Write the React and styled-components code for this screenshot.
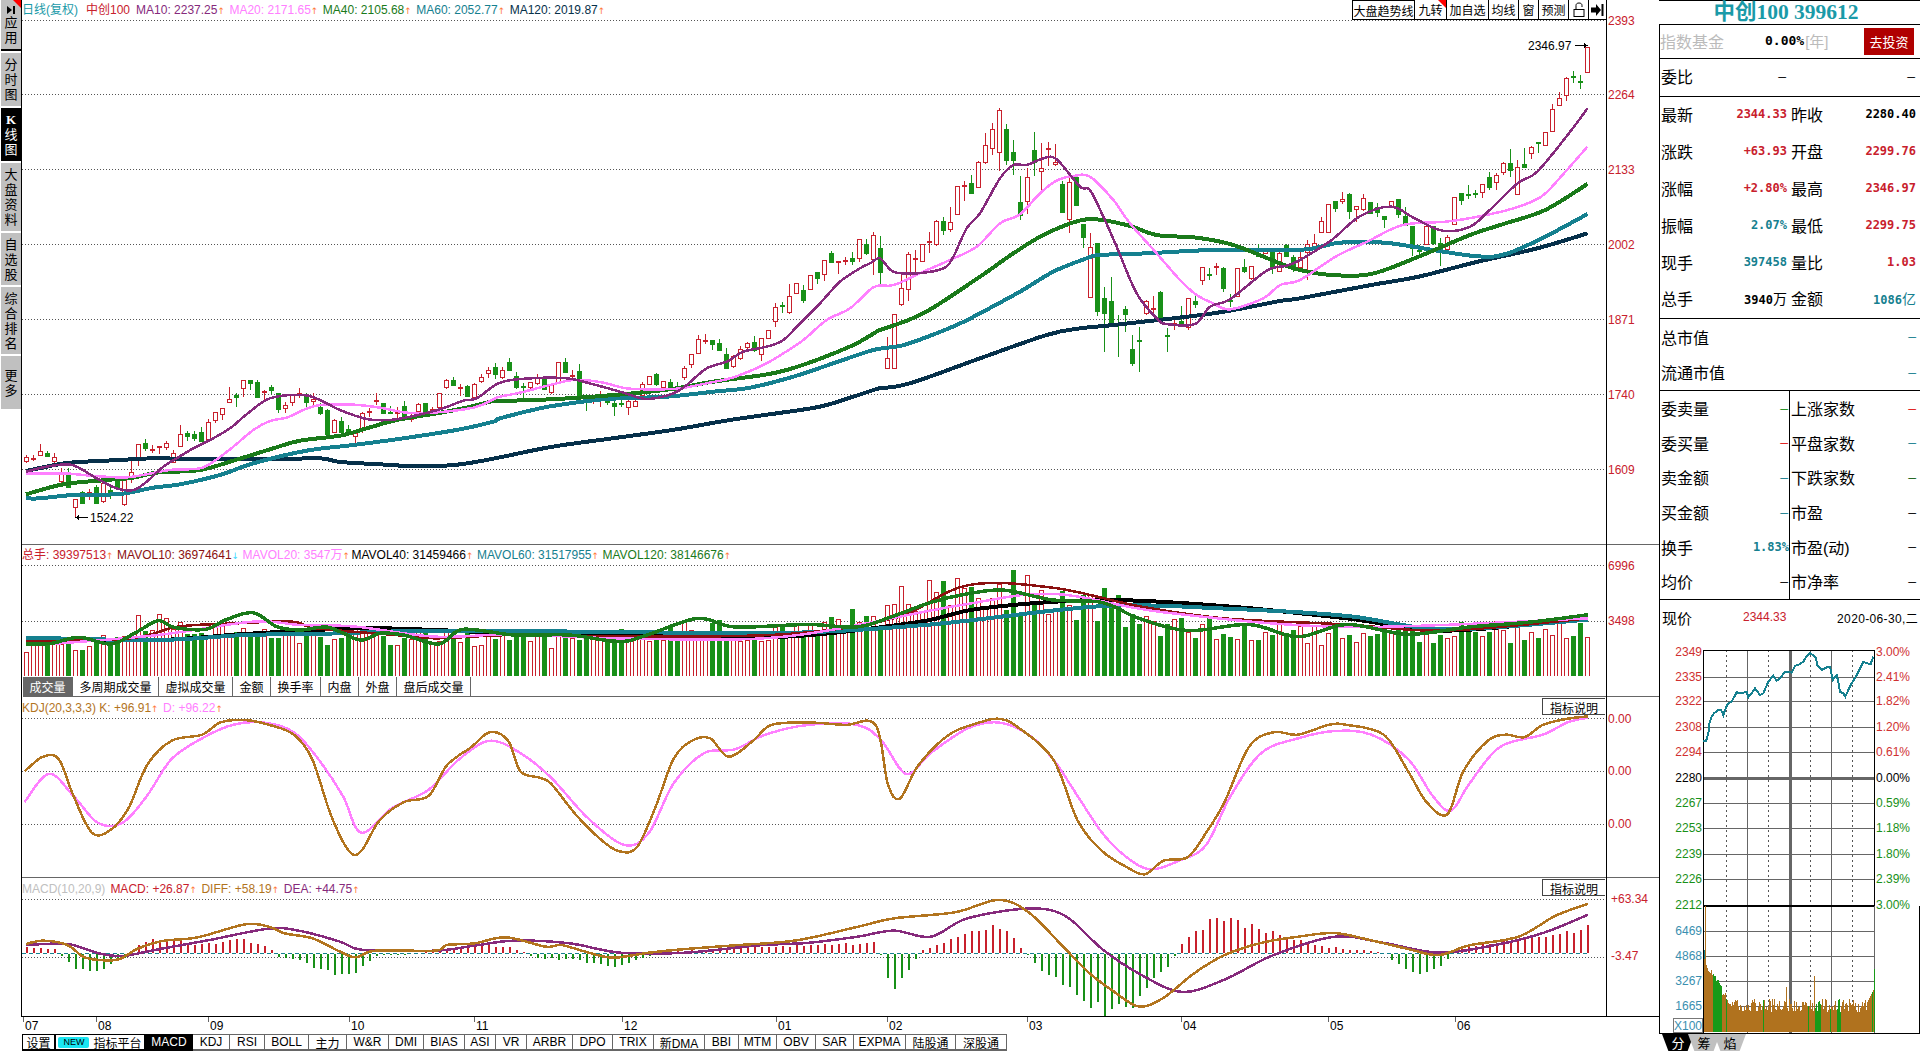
import React from 'react';
import styled, { createGlobalStyle } from 'styled-components';

const SANS = '"Liberation Sans", "Noto Sans CJK SC", sans-serif';
const MONO = '"DejaVu Sans Mono", "Liberation Mono", "Noto Sans CJK SC", monospace';

const RED = '#c8202c';
const GREEN = '#189018';
const TEAL = '#15808f';
const PINK = '#ff80ff';
const PURPLE = '#862a7c';
const DKGREEN = '#1a7a1a';
const NAVY = '#06304a';
const BROWN = '#b2741e';
const LINE = '#666666';

// chart readings: each helper turns points read off a crop into page pixels
const at = (ox, oy, kx = 3, ky = 3) => (pts) => pts.map(([x, y]) => [ox + x / kx, oy + y / ky]);
const LEFT = at(20, 370);
const MID = at(500, 200);
const CENTER = at(880, 100);
const RIGHT = at(1300, 0, 2.529, 3);
const VOL = at(0, 540, 2.529, 3);
const OSC = at(0, 880, 2.529, 3);
const WHOLE = at(0, 0, 1 / 1.2245, 1 / 1.2245);
const MINI = at(1640, 660);

const candleRows = (oy, rows) => rows.map(([up, t, b, h, l]) => ({
  up, top: oy + t / 3, bot: oy + b / 3, hi: oy + h / 3, lo: oy + l / 3,
}));

const CANDLES = [
  ...candleRows(370, [
    [1,260,272,255,280],[1,263,265,255,272],[1,243,254,222,254],[0,250,258,244,262],[1,262,272,250,280],
    [1,305,332,295,340],[0,312,352,295,354],[1,388,410,388,440],[0,367,398,362,400],[1,365,375,358,390],
    [0,351,400,345,402],[1,338,392,335,398],[0,360,372,345,388],[0,330,352,320,360],[1,330,402,325,408],
    [1,305,322,270,340],[1,223,264,222,288],[0,218,234,207,242],[1,238,241,225,248],[1,229,231,229,253],
    [1,220,231,213,240],[1,250,275,240,280],[1,193,227,165,227],[0,190,197,184,212],[0,192,204,183,212],
    [0,186,212,172,214],[1,156,207,148,212],[1,127,149,125,158],[1,115,131,113,150],[1,88,95,52,97],
    [0,74,82,70,110],[1,31,55,30,80],[0,31,40,30,60],[0,35,80,30,85],[1,64,66,60,95],
    [0,50,60,45,72],[0,70,116,68,128],[1,106,114,97,128],[1,76,95,72,107],[1,70,72,55,85],
    [0,78,96,70,112],[1,88,94,68,106],[0,110,130,100,134],[0,120,192,118,195],[1,151,185,148,188],
    [0,153,185,142,188],[0,178,192,165,195],[1,190,198,190,225],[1,128,180,125,190],[1,124,126,115,142],
    [1,90,94,70,105],[0,100,128,98,132],[0,126,129,108,132],[1,125,127,112,148],[0,108,138,93,142],
    [1,145,147,130,155],[1,103,122,100,124],[0,100,126,98,128],[1,118,120,112,132],[1,70,112,68,118],
    [1,31,50,28,56],[0,30,44,20,46],[1,50,52,42,78],[0,48,78,45,82],[1,43,82,40,88],
    [1,22,34,12,38],[1,0,10,-10,24],[0,-10,12,-20,26],[1,0,20,-10,28],
  ]),
  ...candleRows(200, [
    [0,487,510,475,512],[0,528,560,517,566],[0,558,560,548,600],[1,547,560,547,568],[1,532,548,522,555],
    [0,538,568,530,570],[1,553,575,550,582],[1,487,548,487,548],[0,487,516,475,520],[1,525,527,510,540],
    [0,513,584,492,604],[0,585,587,582,632],[1,587,589,585,612],[1,590,592,573,620],[0,590,605,580,615],
    [0,610,618,592,648],[0,608,610,596,620],[1,604,620,590,645],[1,604,617,598,622],[1,553,585,545,590],
    [1,529,551,529,556],[0,522,552,518,558],[1,544,560,542,562],[0,546,562,537,565],[0,558,570,545,575],
    [1,505,530,497,540],[1,463,491,463,504],[1,418,459,405,462],[1,420,422,403,432],[0,420,432,420,450],
    [0,430,450,418,452],[0,462,503,445,505],[1,467,497,465,505],[1,448,474,438,480],[1,430,442,425,455],
    [0,426,450,408,455],[1,415,461,415,483],[1,391,415,391,415],[1,322,362,310,380],[0,315,317,306,338],
    [1,289,335,252,342],[1,250,280,250,282],[0,270,300,255,308],[1,226,266,226,266],[0,216,234,216,252],
    [1,181,223,181,243],[0,159,185,153,188],[1,183,185,183,222],[1,181,183,170,195],[0,174,182,156,195],
    [1,118,175,118,186],[0,132,158,117,165],[1,106,176,96,224],[0,144,216,108,258],
  ]),
  ...candleRows(100, [
    [1,775,805,712,807],[1,643,803,643,803],[1,565,613,515,617],[1,463,568,455,602],[1,473,475,450,515],
    [1,433,482,433,485],[1,424,426,396,458],[1,363,431,360,437],[0,363,389,350,405],[1,367,388,322,395],
    [1,259,343,259,343],[1,254,259,243,303],[0,250,278,225,280],[1,187,260,182,262],[1,136,187,98,192],
    [1,88,145,70,165],[1,31,157,25,212],[0,87,180,72,195],[0,156,180,120,225],[0,306,345,228,360],
    [1,232,302,205,342],[0,150,185,96,228],[1,203,214,130,270],[1,143,146,126,198],[1,186,193,132,198],
    [0,252,335,244,340],[1,246,358,232,398],[0,230,314,230,316],[0,372,410,372,443],[1,442,592,400,592],
    [0,429,632,429,647],[0,594,638,560,755],[0,603,672,532,675],[0,672,674,645,770],[0,627,641,618,695],
    [0,747,788,705,797],[0,720,722,680,815],[1,604,638,600,645],[1,625,628,588,650],[0,576,651,574,654],
    [0,704,706,685,755],[1,668,676,655,690],[0,664,672,618,675],[1,595,682,595,690],[0,603,611,582,625],
    [1,502,541,500,555],[0,522,524,504,540],[1,499,501,490,525],[0,505,563,500,575],[0,600,604,583,622],
    [1,505,588,505,590],[0,502,513,478,520],[1,497,533,497,540],[0,458,467,433,468],[1,443,460,443,462],
    [0,457,500,457,522],[1,460,512,450,514],[0,436,467,432,470],[0,470,498,465,515],[1,470,500,445,512],
    [1,432,455,420,540],[1,428,445,403,450],[1,364,397,350,398],[1,313,397,312,398],[0,304,323,304,337],
    [1,298,304,277,313],[0,283,332,280,356],[1,318,328,318,366],[1,293,326,283,332],[0,307,339,307,342],
    [0,322,337,310,352],
  ]),
  ...candleRows(0, [
    [0,648,656,648,685],[1,604,620,604,622],[0,598,642,598,654],[0,648,675,622,675],[0,678,745,678,768],
    [0,750,753,735,775],[1,678,732,678,735],[0,678,730,678,735],[0,730,745,715,797],[1,710,748,705,750],
    [1,592,672,590,675],[0,580,600,578,615],[0,583,585,555,598],[0,580,582,570,595],[1,553,575,553,595],
    [0,530,562,515,570],[1,525,547,520,570],[1,490,515,485,525],[0,490,510,448,530],[1,500,582,480,585],
    [0,493,500,445,500],[1,440,460,438,478],[0,427,429,427,460],[1,397,435,395,438],[1,328,392,312,392],
    [1,295,314,277,314],[1,235,284,232,302],[0,229,231,213,250],[0,244,246,226,268],[1,142,215,142,215],
  ]),
];

const candleX = (i) => 26 + 7 * i;

const MA10 = [
  ...LEFT([[18,305],[80,290],[145,283],[180,295],[230,325],[290,355],[340,360],[380,335],[430,290],[470,265],[520,235],[570,210],[630,175],[680,133],[750,85],[850,75],[900,90],[960,120],[1040,147],[1110,150],[1180,138],[1260,118],[1330,92],[1370,85],[1440,38]]),
  ...MID([[90,535],[200,535],[280,553],[370,578],[440,597],[520,580],[560,555],[620,505],[680,485],[730,455],[800,440],[850,420],[900,370],[960,310],[1020,245],[1080,205],[1110,190]]),
  ...CENTER([[0,475],[40,515],[110,520],[190,505],[220,470],[260,385],[300,340],[360,235],[400,195],[440,195],[490,175],[530,178],[600,260],[630,270],[670,350],[710,440],[770,580],[830,655],[860,672],[945,672],[990,620],[1050,598],[1160,512],[1220,497]]),
  ...RIGHT([[0,780],[80,720],[150,650],[230,620],[290,655],[360,692],[430,680],[480,630],[550,550],[600,515],[680,400],[727,325]]),
];
const MA20 = [
  ...LEFT([[18,311],[130,310],[200,316],[290,322],[340,320],[450,300],[540,295],[590,268],[640,230],[700,180],[750,153],[800,143],[850,120],[900,105],[1000,104],[1080,113],[1160,128],[1240,128],[1360,113],[1420,88]]),
  ...MID([[0,590],[60,578],[150,555],[220,540],[300,546],[380,565],[470,568],[540,565],[630,548],[700,532],[790,495],[850,460],[910,420],[980,360],[1050,325],[1120,262],[1170,257]]),
  ...CENTER([[60,548],[130,515],[210,480],[290,440],[360,370],[420,343],[480,280],[530,242],[580,228],[630,230],[700,300],[750,370],[830,460],[900,540],[950,585],[1000,610],[1050,628],[1150,595],[1200,555],[1260,540]]),
  ...RIGHT([[90,770],[170,725],[260,675],[370,665],[450,650],[540,625],[610,590],[660,530],[727,440]]),
];
const MA40 = [
  ...LEFT([[18,373],[130,343],[260,330],[340,323],[410,308],[540,300],[640,272],[760,235],[840,212],[960,197],[1040,175],[1130,150],[1250,130],[1330,115],[1420,93]]),
  ...MID([[0,603],[150,598],[280,590],[420,578],[530,565],[640,545],[790,525],[860,510],[950,480],[1060,435],[1130,395]]),
  ...CENTER([[0,690],[130,640],[300,530],[400,460],[500,400],[620,358],[740,375],[830,405],[950,413],[1060,435],[1200,490],[1260,510]]),
  ...RIGHT([[80,825],[180,822],[300,770],[430,705],[520,670],[620,630],[727,552]]),
];
const MA60 = [
  ...LEFT([[18,385],[60,385],[160,375],[300,372],[400,353],[480,343],[600,315],[700,280],[860,242],[1000,225],[1150,205],[1320,178],[1420,155]]),
  ...MID([[0,655],[120,625],[190,613],[320,597],[500,590],[640,575],[750,563],[880,530],[1000,490],[1120,450]]),
  ...CENTER([[60,738],[130,715],[230,675],[300,640],[420,575],[520,515],[620,475],[660,465],[800,460],[1000,450],[1260,450]]),
  ...RIGHT([[100,728],[200,727],[260,735],[440,768],[520,762],[620,710],[727,642]]),
];
const MA120 = [
  ...LEFT([[18,303],[80,290],[150,278],[300,270],[400,265],[570,268],[760,268],[900,265],[960,276],[1080,283],[1150,287],[1290,286],[1400,270]]),
  ...WHOLE([[450,365],[500,358],[550,351]]),
  ...MID([[690,660],[830,640],[960,620],[1060,590],[1130,567]]),
  ...CENTER([[0,865],[90,850],[300,775],[500,705],[600,685],[700,675],[1000,640],[1200,603]]),
  ...RIGHT([[0,895],[180,855],[300,830],[450,785],[600,745],[727,700]]),
];

const VOL_GREEN = [
  ...VOL([[65,312],[130,310],[200,292],[280,312],[340,280],[400,242],[440,262],[520,268],[570,240],[640,218],[700,260],[760,270],[830,262],[910,300],[960,280],[1020,285],[1110,312],[1170,268],[1300,285],[1440,285],[1568,305]]),
  ...WHOLE([[530,518],[570,505],[600,512],[660,510],[700,512],[730,503],[760,492],[790,485],[820,482],[860,490],[900,492],[930,505],[970,515],[1020,510],[1060,520],[1100,510],[1150,518],[1200,512],[1250,508],[1297,502]]),
];
const VOL_BLACK = [
  ...VOL([[65,300],[400,300],[620,282],[900,265],[1100,270],[1300,280],[1568,285]]),
  ...WHOLE([[640,520],[750,508],[800,497],[900,490],[1000,495],[1100,505],[1180,515],[1297,505]]),
];
const VOL_TEAL = [
  ...VOL([[65,293],[400,300],[620,285],[800,282],[1100,272],[1568,276]]),
  ...WHOLE([[640,517],[760,510],[900,495],[1000,497],[1100,503],[1180,514],[1297,506]]),
];
const VOL_RED = [
  ...VOL([[65,305],[330,295],[450,260],[600,250],[740,245],[800,265],[1000,285],[1100,295],[1300,285],[1568,290]]),
  ...WHOLE([[640,518],[730,505],[790,478],[860,480],[930,495],[1000,505],[1100,510],[1180,515],[1297,505]]),
];
const VOL_PINK = [
  ...VOL([[130,312],[400,285],[640,245],[760,255],[900,260],[1100,290],[1300,283],[1568,295]]),
  ...WHOLE([[640,520],[780,495],[860,485],[950,500],[1100,512],[1297,505]]),
];

const KDJ_K = WHOLE([[20,630],[35,618],[48,620],[60,650],[75,680],[90,678],[105,660],[120,625],[140,605],[165,600],[180,590],[200,588],[220,592],[240,600],[255,620],[270,665],[285,695],[295,695],[310,670],[330,655],[350,650],[365,625],[385,610],[400,598],[415,605],[425,630],[440,635],[450,640],[470,665],[490,685],[505,695],[520,692],[535,660],[550,620],[565,605],[580,603],[595,618],[615,605],[630,592],[660,590],[690,592],[715,592],[725,640],[735,652],[750,625],[775,600],[800,590],[815,587],[830,593],[860,620],[880,670],[900,695],[920,708],[935,714],[950,703],[970,700],[985,680],[1000,655],[1020,610],[1040,598],[1060,600],[1085,592],[1100,592],[1130,600],[1150,630],[1165,655],[1182,665],[1195,630],[1215,605],[1230,600],[1245,602],[1260,592],[1280,587],[1297,585]]);
const KDJ_D = WHOLE([[20,655],[40,632],[60,650],[80,672],[100,672],[120,650],[140,620],[165,603],[190,592],[215,590],[240,598],[260,620],[280,650],[295,680],[320,660],[350,645],[375,620],[400,605],[425,615],[450,635],[480,668],[510,690],[530,680],[550,640],[575,615],[600,612],[625,600],[660,592],[700,592],[720,605],[740,632],[760,615],[790,595],[815,590],[840,600],[860,620],[880,650],[900,680],[920,700],[940,710],[965,702],[985,690],[1005,650],[1030,615],[1060,603],[1090,597],[1120,600],[1150,620],[1170,650],[1185,662],[1200,640],[1225,610],[1260,600],[1280,590],[1297,586]]);

const DIFF = [
  ...OSC([[65,192],[110,182],[170,195],[210,230],[250,240],[300,238],[350,205],[410,183],[500,172],[620,133],[680,140],[720,160],[790,175],[860,215],[900,232],[950,212],[1100,212],[1130,195],[1200,190],[1280,172],[1380,200],[1420,195],[1480,215],[1550,233]]),
  ...WHOLE([[530,778],[560,775],[600,772],[650,768],[700,757],[730,750],[780,745],[815,735],[840,745],[870,775],[890,795],[910,810],[930,822],[950,815],[975,795],[1000,780],[1030,770],[1060,765],[1090,762],[1120,768],[1150,775],[1175,780],[1200,772],[1240,765],[1270,748],[1297,738]]),
];
const DEA = [
  ...OSC([[65,195],[170,192],[250,220],[310,228],[400,208],[530,180],[680,146],[760,153],[860,185],[920,210],[1100,212],[1200,197],[1300,182],[1440,190],[1568,218]]),
  ...WHOLE([[560,778],[620,772],[660,770],[700,765],[730,760],[760,765],[790,750],[840,742],[870,748],[900,775],[930,795],[965,810],[1000,800],[1040,780],[1090,765],[1130,770],[1175,778],[1220,772],[1260,762],[1297,747]]),
];

// histogram height, positive above the zero line, read along the page x
const MACD_LEFT = [[65,5],[135,5],[150,0],[170,-8],[190,-14],[240,-17],[280,-10],[320,-3],[330,0],[340,5],[380,14],[440,12],[500,8],[600,14],[650,10],[685,3],[695,0],[700,-3],[760,-7],[830,-19],[890,-19],[930,-8],[950,-2],[1050,0],[1110,3],[1230,8],[1290,6],[1310,2],[1330,0],[1350,-4],[1400,-5],[1460,-6],[1500,-10],[1568,-12]];
const MACD_RIGHT = [[520,-5],[540,1],[620,6],[715,10],[720,-5],[725,-30],[733,-33],[745,-10],[750,2],[760,6],[790,18],[815,28],[830,10],[838,0],[845,-10],[860,-25],[880,-45],[900,-60],[920,-55],[940,-30],[955,-10],[960,0],[965,10],[985,30],[1000,32],[1020,28],[1050,15],[1090,5],[1120,2],[1130,0],[1140,-10],[1160,-20],[1175,-15],[1185,0],[1190,5],[1220,10],[1250,15],[1297,25]];
const MACD_BARS = [
  ...MACD_LEFT.map(([x, h]) => [x / 2.529, h]),
  ...MACD_RIGHT.map(([x, h]) => [x * 1.2245, h]),
];

const PRICE_LINE = [
  ...MINI([[190,243],[197,243],[200,238],[206,215],[208,190],[215,170],[222,160],[235,150],[243,150],[250,165],[258,142],[265,130],[275,125],[290,97],[305,100],[320,95],[325,112],[335,100],[345,85],[360,105],[370,100],[385,65],[400,47],[410,62],[420,55],[435,35],[455,38],[465,18],[480,12],[490,5],[500,-12],[510,-20],[520,-14],[528,-5],[532,15],[545,30],[560,22],[570,20],[578,60],[590,45],[596,70],[600,95],[610,100],[616,110],[625,90],[635,70],[650,45],[660,25],[670,5],[680,10],[692,12],[700,-10]]),
];

const smooth = (pts) => {
  let d = `M${pts[0][0]} ${pts[0][1]}`;
  for (let i = 0; i < pts.length - 1; i++) {
    const a = pts[i - 1] || pts[i];
    const b = pts[i];
    const c = pts[i + 1];
    const e = pts[i + 2] || c;
    d += `C${b[0] + (c[0] - a[0]) / 6} ${b[1] + (c[1] - a[1]) / 6} ${c[0] - (e[0] - b[0]) / 6} ${c[1] - (e[1] - b[1]) / 6} ${c[0]} ${c[1]}`;
  }
  return d;
};

const yAt = (pts, x) => {
  if (x <= pts[0][0]) return pts[0][1];
  for (let i = 0; i < pts.length - 1; i++) {
    if (x <= pts[i + 1][0]) {
      const t = (x - pts[i][0]) / (pts[i + 1][0] - pts[i][0]);
      return pts[i][1] + (pts[i + 1][1] - pts[i][1]) * t;
    }
  }
  return pts[pts.length - 1][1];
};

let seed = 4711;
const rnd = () => {
  seed = (seed * 16807) % 2147483647;
  return seed / 2147483647;
};

const VOL_ENV = [[26,32],[130,35],[138,55],[240,45],[400,40],[500,40],[560,38],[690,50],[780,45],[880,60],[900,75],[1000,95],[1040,80],[1100,75],[1160,55],[1300,42],[1450,45],[1587,50]];
const VOLUMES = CANDLES.map((_, i) => {
  const base = yAt(VOL_ENV, candleX(i));
  return Math.round(base * (0.72 + rnd() * 0.5));
});

const MACD_HEIGHTS = CANDLES.map((_, i) => Math.round(yAt(MACD_BARS, candleX(i)) * (0.85 + rnd() * 0.3)));

const MINI_VOLS = [];
for (let x = 1704; x <= 1873; x++) {
  let h = 20 + rnd() * 13;
  if (x < 1708) h = 73 - (x - 1704) * 3;
  else if (x < 1722) h = 60 - (x - 1708) * 1.2 + rnd() * 6;
  else if (x < 1726) h = 36 + rnd() * 5;
  else if (x > 1866) h = 28 + (x - 1866) * 2;
  if (x === 1705) h = 126;
  if (x === 1814) h = 56;
  if (x === 1786) h = 45;
  if (x === 1754 || x === 1769 || x === 1825) h = 33;
  const isGreen = (x > 1712 && x < 1722) || (x > 1814 && x < 1820) || (x > 1836 && x < 1841) || rnd() < 0.05;
  MINI_VOLS.push({ x, h: Math.round(h), color: isGreen ? '#189a18' : '#b0721e' });
}

const GlobalStyle = createGlobalStyle`
  html, body {
    margin: 0;
    padding: 0;
    background: #ffffff;
    overflow: hidden;
  }
  * {
    box-sizing: border-box;
  }
`;

const Page = styled.div`
  width: 1920px;
  height: 1051px;
  display: flex;
  background: #ffffff;
  font-family: ${SANS};
  font-size: 12px;
  color: #000000;
`;

const SideBar = styled.nav`
  width: 21px;
  flex: none;
  display: flex;
  flex-direction: column;
  gap: 2px;
  align-items: flex-start;
`;

const SideTab = styled.div`
  position: relative;
  width: 20px;
  height: ${(p) => p.$h}px;
  margin-left: 1px;
  display: flex;
  flex-direction: column;
  align-items: center;
  justify-content: center;
  background: ${(p) => (p.$active ? '#000000' : '#c0c0c0')};
  color: ${(p) => (p.$active ? '#ffffff' : '#000000')};
  border-bottom: ${(p) => (p.$corner ? '2px solid #000000' : 'none')};
  font-size: 13px;
  line-height: 15px;
  ${(p) => p.$corner && `
    &::after {
      content: '';
      position: absolute;
      top: 0;
      right: 0;
      border-style: solid;
      border-width: 0 8px 8px 0;
      border-color: transparent #ff0000 transparent transparent;
    }
  `}
`;

const SideChar = styled.span`
  display: block;
  font-family: ${(p) => (p.$serif ? '"Liberation Serif", serif' : 'inherit')};
  font-weight: ${(p) => (p.$serif ? 700 : 400)};
`;

const Main = styled.div`
  width: 1638px;
  flex: none;
  display: flex;
  flex-direction: column;
`;

const Charts = styled.div`
  position: relative;
  height: 1017px;
  display: flex;
  flex-direction: column;
  border-left: 1px solid #000000;
  &::after {
    content: '';
    position: absolute;
    left: 1584px;
    top: 0;
    bottom: 0;
    width: 1px;
    background: #000000;
  }
`;

const ChartPanel = styled.section`
  position: relative;
  height: ${(p) => p.$h}px;
  flex: none;
  border-bottom: 1px solid ${(p) => p.$edge || LINE};
`;

const Plot = styled.svg`
  display: block;
  shape-rendering: crispEdges;
`;

const AxisLabel = styled.text`
  font-family: ${SANS};
  font-size: 12px;
  dominant-baseline: central;
`;

const Legend = styled.div`
  position: absolute;
  left: 0;
  top: ${(p) => p.$top}px;
  display: flex;
  white-space: nowrap;
  line-height: 14px;
  font-size: 12px;
`;

const LegendItem = styled.span`
  color: ${(p) => p.$color};
  margin-right: ${(p) => p.$gap ?? 5}px;
`;

const Trend = styled.span`
  display: inline-block;
  width: 7px;
  text-align: center;
  font-family: "DejaVu Sans", sans-serif;
  font-size: 9px;
  line-height: 10px;
  color: ${(p) => (p.$down ? '#40d8ff' : '#ff7a3c')};
`;

const ToolBar = styled.div`
  position: absolute;
  right: 53px;
  top: 0;
  display: flex;
  height: 20px;
  background: #ffffff;
`;

const ToolButton = styled.button`
  position: relative;
  width: ${(p) => p.$w}px;
  height: 20px;
  padding: 0;
  display: flex;
  align-items: center;
  justify-content: center;
  background: #ffffff;
  color: #000000;
  font: 12px ${SANS};
  border: none;
  border-left: 1px solid #000000;
  border-bottom: 1px solid #000000;
  border-top: ${(p) => (p.$boxed ? '1px solid #000000' : 'none')};
  ${(p) => p.$flag && `
    &::after {
      content: '';
      position: absolute;
      top: 0;
      right: 0;
      border-style: solid;
      border-width: 0 8px 8px 0;
      border-color: transparent #ff0000 transparent transparent;
    }
  `}
`;

const NoteButton = styled.button`
  position: absolute;
  left: 1520px;
  top: ${(p) => p.$top}px;
  width: 63px;
  height: 17px;
  padding: 0;
  background: #ffffff;
  color: #000000;
  font: 12px ${SANS};
  border: 1px solid #444444;
  border-right: none;
`;

const VolumeTabs = styled.div`
  height: 20px;
  flex: none;
  display: flex;
  border-bottom: 1px solid ${LINE};
  margin-left: 1px;
`;

const VolumeTab = styled.div`
  padding: 0 6.5px;
  display: flex;
  align-items: center;
  font-size: 12px;
  border-right: 1px solid ${LINE};
  background: ${(p) => (p.$active ? LINE : '#ffffff')};
  color: ${(p) => (p.$active ? '#ffffff' : '#000000')};
`;

const DateAxis = styled.svg`
  display: block;
  height: 17px;
  flex: none;
  shape-rendering: crispEdges;
  margin-left: 1px;
`;

const BottomTabs = styled.div`
  height: 17px;
  flex: none;
  display: flex;
  margin-left: 1px;
`;

const BottomTab = styled.div`
  width: ${(p) => p.$w}px;
  display: flex;
  align-items: center;
  justify-content: center;
  gap: 4px;
  font-size: 12px;
  white-space: nowrap;
  background: ${(p) => (p.$active ? '#000000' : '#ffffff')};
  color: ${(p) => (p.$active ? '#ffffff' : '#000000')};
  border: 1px solid ${(p) => (p.$dark ? '#000000' : LINE)};
  border-left-width: ${(p) => (p.$dark ? 1 : 0)}px;
  border-bottom-width: 2px;
`;

const NewBadge = styled.span`
  padding: 0 5px;
  height: 11px;
  line-height: 11px;
  border-radius: 2px;
  background: #19e6f2;
  color: #000000;
  font-size: 9px;
`;

const InfoPanel = styled.aside`
  width: 261px;
  flex: none;
  display: flex;
  flex-direction: column;
`;

const StockTitle = styled.h1`
  margin: 0;
  height: 25px;
  flex: none;
  border-top: 1px solid #000000;
  border-bottom: 1px solid #000000;
  text-align: center;
  padding-right: 7px;
  font: 700 21.5px/22px "Liberation Serif", "Noto Sans CJK SC", serif;
  color: #1a9aa8;
`;

const InfoBody = styled.div`
  flex: 1;
  display: flex;
  flex-direction: column;
  border-left: 1px solid #000000;
`;

const FundRow = styled.div`
  height: 34px;
  flex: none;
  display: flex;
  align-items: center;
  padding-bottom: 2px;
  border-bottom: 1px solid #000000;
  font-size: 16px;
`;

const FundName = styled.span`
  width: 105px;
  color: #bbbbbb;
`;

const FundRate = styled.span`
  font: 700 13px ${MONO};
`;

const FundUnit = styled.span`
  color: #bbbbbb;
  font-size: 15px;
  margin-left: 1px;
`;

const InvestButton = styled.button`
  margin-left: auto;
  margin-right: 6px;
  margin-top: 2px;
  width: 50px;
  height: 27px;
  padding: 0;
  border: none;
  background: #b00000;
  color: #ffffff;
  font: 13px ${SANS};
`;

const InfoBlock = styled.div`
  flex: none;
  height: ${(p) => p.$h}px;
  display: grid;
  grid-template-columns: ${(p) => (p.$split ? '130px 130px' : '1fr')};
  grid-auto-rows: ${(p) => p.$row}px;
  border-bottom: 1px solid #000000;
`;

const InfoCell = styled.div`
  display: flex;
  align-items: center;
  justify-content: space-between;
  padding: 0 ${(p) => (p.$col === 1 ? 1 : 3)}px 0 1px;
  font-size: 16px;
  ${(p) => p.$divided && `
    position: relative;
    &::after {
      content: '';
      position: absolute;
      top: 0;
      bottom: 0;
      right: 0;
      width: 1px;
      background: #000000;
    }
  `}
`;

const Value = styled.span`
  color: ${(p) => p.$color || '#000000'};
  font: ${(p) => (p.$plain ? '400 13px' : '700 12px')} ${MONO};
  padding-right: ${(p) => (p.$plain ? 1 : 0)}px;
`;

const ValueUnit = styled.span`
  font: 400 14px ${SANS};
`;

const QuoteRow = styled.div`
  display: grid;
  grid-template-columns: 127px 3px 130px;
`;

const QuotePair = styled.div`
  display: flex;
  align-items: center;
  justify-content: space-between;
  padding: 0 ${(p) => (p.$far ? 4 : 0)}px 3px 1px;
  font-size: 16px;
`;

const CurrentRow = styled.div`
  height: 40px;
  flex: none;
  display: flex;
  align-items: center;
  font-size: 15px;
  padding: 0 2px 6px 2px;
`;

const CurrentPrice = styled.span`
  margin-left: 51px;
  color: ${RED};
  font-size: 12px;
`;

const CurrentDate = styled.span`
  margin-left: auto;
  font-size: 12px;
  letter-spacing: 0.35px;
`;

const ModeTabs = styled.div`
  height: 17px;
  flex: none;
  display: flex;
  padding-left: 3px;
`;

const ModeTab = styled.div`
  width: 32px;
  margin-right: -6px;
  display: flex;
  align-items: center;
  justify-content: center;
  font-size: 13px;
  background: ${(p) => (p.$active ? '#000000' : '#c0c0c0')};
  color: ${(p) => (p.$active ? '#ffffff' : '#000000')};
  clip-path: polygon(0 0, 100% 0, 80% 100%, 20% 100%);
`;

const Grid = ({ ys }) => ys.map((y) => (
  <line key={y} x1="22" x2="1606" y1={y + 0.5} y2={y + 0.5} stroke="#555555" strokeDasharray="1 2" />
));

const Curve = ({ pts, color, width }) => (
  <path d={smooth(pts)} fill="none" stroke={color} strokeWidth={width} strokeLinejoin="round" />
);

const Candle = ({ c, x }) => {
  const color = c.up ? RED : GREEN;
  const top = Math.round(c.top);
  const bot = Math.max(Math.round(c.bot), top + 1);
  return (
    <g>
      <line x1={x + 0.5} x2={x + 0.5} y1={Math.round(c.hi)} y2={Math.round(c.lo)} stroke={color} />
      {c.up ? (
        <rect x={x - 1.5} y={top + 0.5} width="4" height={bot - top} fill="#ffffff" stroke={color} />
      ) : (
        <rect x={x - 2} y={top} width="5" height={bot - top + 1} fill={color} />
      )}
    </g>
  );
};

const PRICE_AXIS = [['2393', 21], ['2264', 95], ['2133', 170], ['2002', 245], ['1871', 320], ['1740', 395], ['1609', 470]];
const PRICE_LEGEND = [
  { t: '日线(复权)', c: '#1a9aa8', gap: 8 },
  { t: '中创100', c: '#c8202c', gap: 6 },
  { t: 'MA10: 2237.25', c: PURPLE, up: true },
  { t: 'MA20: 2171.65', c: PINK, up: true },
  { t: 'MA40: 2105.68', c: DKGREEN, up: true },
  { t: 'MA60: 2052.77', c: TEAL, up: true },
  { t: 'MA120: 2019.87', c: NAVY, up: true },
];
const VOL_LEGEND = [
  { t: '总手: 39397513', c: RED, up: true, gap: 4 },
  { t: 'MAVOL10: 36974641', c: '#8b1010', down: true, gap: 4 },
  { t: 'MAVOL20: 3547万', c: PINK, up: true, gap: 2 },
  { t: 'MAVOL40: 31459466', c: '#000000', up: true, gap: 4 },
  { t: 'MAVOL60: 31517955', c: TEAL, up: true, gap: 4 },
  { t: 'MAVOL120: 38146676', c: DKGREEN, up: true, gap: 4 },
];
const KDJ_LEGEND = [
  { t: 'KDJ(20,3,3,3) K: +96.91', c: BROWN, up: true },
  { t: 'D: +96.22', c: PINK, up: true },
];
const MACD_LEGEND = [
  { t: 'MACD(10,20,9)', c: '#c0c0c0' },
  { t: 'MACD: +26.87', c: RED, up: true },
  { t: 'DIFF: +58.19', c: BROWN, up: true },
  { t: 'DEA: +44.75', c: PURPLE, up: true },
];

const TOOLS = [['大盘趋势线', 62, true], ['九转', 32, false, true], ['加自选', 42], ['均线', 30], ['窗', 20], ['预测', 30]];
const VOLUME_TABS = ['成交量', '多周期成交量', '虚拟成交量', '金额', '换手率', '内盘', '外盘', '盘后成交量'];
const BOTTOM_TABS = [['KDJ', 37], ['RSI', 35], ['BOLL', 44], ['主力', 38], ['W&R', 42], ['DMI', 35], ['BIAS', 41], ['ASI', 31], ['VR', 31], ['ARBR', 46], ['DPO', 40], ['TRIX', 41], ['新DMA', 51], ['BBI', 34], ['MTM', 38], ['OBV', 39], ['SAR', 38], ['EXPMA', 52], ['陆股通', 50], ['深股通', 51]];
const MONTHS = [['07', 23], ['08', 96], ['09', 208], ['10', 349], ['11', 474], ['12', 622], ['01', 776], ['02', 887], ['03', 1027], ['04', 1181], ['05', 1328], ['06', 1455]];
const QUOTES = [
  ['最新', '2344.33', RED, '昨收', '2280.40', '#000000'],
  ['涨跌', '+63.93', RED, '开盘', '2299.76', RED],
  ['涨幅', '+2.80%', RED, '最高', '2346.97', RED],
  ['振幅', '2.07%', TEAL, '最低', '2299.75', RED],
  ['现手', '397458', TEAL, '量比', '1.03', RED],
  ['总手', '3940', '#000000', '金额', '1086', TEAL, '万', '亿'],
];
const DEPTH = [
  ['委卖量', '–', GREEN, '上涨家数', '–', '#e01010'],
  ['委买量', '–', '#e01010', '平盘家数', '–', TEAL],
  ['卖金额', '–', TEAL, '下跌家数', '–', '#106010'],
  ['买金额', '–', TEAL, '市盈', '–', '#000000'],
  ['换手', '1.83%', TEAL, '市盈(动)', '–', '#000000'],
  ['均价', '–', '#000000', '市净率', '–', '#000000'],
];
const MINI_LEFT = [['2349', 652, '#d03030'], ['2335', 677, '#d03030'], ['2322', 701, '#d03030'], ['2308', 727, '#d03030'], ['2294', 752, '#d03030'], ['2280', 778, '#000000'], ['2267', 803, GREEN], ['2253', 828, GREEN], ['2239', 854, GREEN], ['2226', 879, GREEN], ['2212', 905, GREEN], ['6469', 931, '#3a8fb0'], ['4868', 956, '#3a8fb0'], ['3267', 981, '#3a8fb0'], ['1665', 1006, '#3a8fb0']];
const MINI_RIGHT = [['3.00%', 652, '#d03030'], ['2.41%', 677, '#d03030'], ['1.82%', 701, '#d03030'], ['1.20%', 727, '#d03030'], ['0.61%', 752, '#d03030'], ['0.00%', 778, '#000000'], ['0.59%', 803, GREEN], ['1.18%', 828, GREEN], ['1.80%', 854, GREEN], ['2.39%', 879, GREEN], ['3.00%', 905, GREEN]];

const LegendRow = ({ items, top }) => (
  <Legend $top={top}>
    {items.map((it) => (
      <LegendItem key={it.t} $color={it.c} $gap={it.gap}>
        {it.t}
        {it.up && <Trend>↑</Trend>}
        {it.down && <Trend $down>↓</Trend>}
      </LegendItem>
    ))}
  </Legend>
);

const PricePanel = () => (
  <ChartPanel $h={545}>
    <Plot width="1637" height="544" viewBox="22 0 1637 544">
      <Grid ys={[20, 94, 169, 244, 319, 394, 469]} />
      {PRICE_AXIS.map(([t, y]) => <AxisLabel key={t} x="1608" y={y} fill={RED}>{t}</AxisLabel>)}
      {CANDLES.map((c, i) => <Candle key={i} c={c} x={candleX(i)} />)}
      <Curve pts={MA120} color={NAVY} width={4} />
      <Curve pts={MA60} color={TEAL} width={4} />
      <Curve pts={MA40} color={DKGREEN} width={4} />
      <Curve pts={MA20} color={PINK} width={2.5} />
      <Curve pts={MA10} color={PURPLE} width={2.5} />
      <AxisLabel x="1528" y="46" fill="#000000">2346.97</AxisLabel>
      <line x1="1575" x2="1587" y1="45.5" y2="45.5" stroke="#000000" />
      <polygon points="1588,45.5 1584,43 1584,48" fill="#000000" />
      <AxisLabel x="90" y="518" fill="#000000">1524.22</AxisLabel>
      <line x1="76" x2="88" y1="517.5" y2="517.5" stroke="#000000" />
      <polygon points="75,517.5 79,515 79,520" fill="#000000" />
    </Plot>
    <LegendRow top={3} items={PRICE_LEGEND} />
    <ToolBar>
      {TOOLS.map(([t, w, boxed, flag]) => <ToolButton key={t} $w={w} $boxed={boxed} $flag={flag}>{t}</ToolButton>)}
      <ToolButton $w={20} title="lock">
        <svg width="12" height="16" viewBox="0 0 12 16" fill="none" stroke="#000000" strokeWidth="1">
          <path d="M3 7V3.5C3 2 4 1 6 1s3 1 3 2.5V5" />
          <rect x="1" y="7.5" width="10" height="7" />
        </svg>
      </ToolButton>
      <ToolButton $w={18} title="next">
        <svg width="13" height="12" viewBox="0 0 13 12" fill="#000000">
          <path d="M0 3.5H5V0L10 6L5 12V8.5H0Z" />
          <rect x="10.5" y="0" width="2" height="12" />
        </svg>
      </ToolButton>
    </ToolBar>
  </ChartPanel>
);

const VolumePanel = () => (
  <ChartPanel $h={132} $edge="transparent">
    <Plot width="1637" height="131" viewBox="22 545 1637 131">
      <Grid ys={[565, 621]} />
      <AxisLabel x="1608" y="566" fill={RED}>6996</AxisLabel>
      <AxisLabel x="1608" y="621" fill={RED}>3498</AxisLabel>
      {VOLUMES.map((h, i) => {
        const x = candleX(i);
        return CANDLES[i].up ? (
          <rect key={i} x={x - 1.5} y={676.5 - h} width="4" height={h + 2} fill="#ffffff" stroke={RED} />
        ) : (
          <rect key={i} x={x - 2} y={677 - h} width="5" height={h} fill={GREEN} />
        );
      })}
      <Curve pts={VOL_BLACK} color="#000000" width={4} />
      <Curve pts={VOL_TEAL} color={TEAL} width={4} />
      <Curve pts={VOL_RED} color="#8b1010" width={2.5} />
      <Curve pts={VOL_PINK} color={PINK} width={2.5} />
      <Curve pts={VOL_GREEN} color={DKGREEN} width={3.5} />
    </Plot>
    <LegendRow top={3} items={VOL_LEGEND} />
  </ChartPanel>
);

const KdjPanel = () => (
  <ChartPanel $h={181}>
    <Plot width="1637" height="180" viewBox="22 697 1637 180">
      <Grid ys={[718, 771, 824]} />
      {[719, 771, 824].map((y) => <AxisLabel key={y} x="1608" y={y} fill={RED}>0.00</AxisLabel>)}
      <Curve pts={KDJ_D} color={PINK} width={2.5} />
      <Curve pts={KDJ_K} color={BROWN} width={2.5} />
    </Plot>
    <LegendRow top={4} items={KDJ_LEGEND} />
    <NoteButton $top={1}>指标说明</NoteButton>
  </ChartPanel>
);

const MacdPanel = () => (
  <ChartPanel $h={139} $edge="#000000">
    <Plot width="1637" height="138" viewBox="22 878 1637 138">
      <Grid ys={[899, 957]} />
      <line x1="22" x2="1590" y1="953.5" y2="953.5" stroke={TEAL} strokeDasharray="4 3" />
      <AxisLabel x="1611" y="899" fill={RED}>+63.34</AxisLabel>
      <AxisLabel x="1611" y="956" fill={RED}>-3.47</AxisLabel>
      {MACD_HEIGHTS.map((h, i) => {
        if (h === 0) return null;
        const x = candleX(i);
        return h > 0
          ? <rect key={i} x={x} y={953 - h} width="2" height={h} fill={RED} />
          : <rect key={i} x={x} y={954} width="2" height={-h} fill={GREEN} />;
      })}
      <Curve pts={DEA} color={PURPLE} width={2.5} />
      <Curve pts={DIFF} color={BROWN} width={2.5} />
    </Plot>
    <LegendRow top={4} items={MACD_LEGEND} />
    <NoteButton $top={1}>指标说明</NoteButton>
  </ChartPanel>
);

const MiniChart = () => (
  <Plot width="260" height="394" viewBox="1660 640 260 394">
    {[677, 701, 727, 752, 803, 828, 854, 879, 931, 956, 981, 1006].map((y) => (
      <line key={y} x1="1703" x2="1874" y1={y + 0.5} y2={y + 0.5} stroke={LINE} />
    ))}
    {[1747, 1831].map((x) => <line key={x} x1={x + 0.5} x2={x + 0.5} y1="650" y2="1033" stroke={LINE} />)}
    {[1726, 1768, 1810, 1852].map((x) => (
      <line key={x} x1={x + 0.5} x2={x + 0.5} y1="650" y2="1033" stroke="#555555" strokeDasharray="2 3" />
    ))}
    <rect x="1789" y="650" width="3" height="383" fill={LINE} />
    <rect x="1703" y="777" width="171" height="3" fill={LINE} />
    <line x1="1703" x2="1874" y1="650.5" y2="650.5" stroke="#000000" />
    <line x1="1703" x2="1874" y1="905.5" y2="905.5" stroke="#000000" strokeWidth="2" />
    <line x1="1703.5" x2="1703.5" y1="650" y2="1033" stroke="#000000" />
    <line x1="1874.5" x2="1874.5" y1="650" y2="906" stroke="#000000" />
    <line x1="1874.5" x2="1874.5" y1="906" y2="1033" stroke={LINE} />
    <line x1="1919.5" x2="1919.5" y1="906" y2="1034" stroke="#000000" />
    <rect x="1704" y="950" width="1" height="82" fill={TEAL} />
    {MINI_VOLS.map((b) => <rect key={b.x} x={b.x} y={1032 - b.h} width="1" height={b.h} fill={b.color} />)}
    <rect x="1874" y="969" width="1" height="63" fill="#189a18" />
    <path d={`M${PRICE_LINE.map((p) => `${p[0]} ${p[1]}`).join('L')}`} fill="none" stroke={TEAL} strokeWidth="2" />
    {MINI_LEFT.map(([t, y, c]) => <AxisLabel key={t} x="1702" y={y} fill={c} textAnchor="end">{t}</AxisLabel>)}
    {MINI_RIGHT.map(([t, y, c]) => <AxisLabel key={t + y} x="1876" y={y} fill={c}>{t}</AxisLabel>)}
    <rect x="1673.5" y="1018.5" width="29" height="14" fill="#ffffff" stroke="#777777" />
    <AxisLabel x="1674" y="1026" fill="#3a8fb0">X100</AxisLabel>
    <line x1="1660" x2="1920" y1="1033.5" y2="1033.5" stroke="#000000" />
  </Plot>
);

const Info = () => (
  <InfoPanel>
    <StockTitle>中创100 399612</StockTitle>
    <InfoBody>
      <FundRow>
        <FundName>指数基金</FundName>
        <FundRate>0.00%</FundRate>
        <FundUnit>[年]</FundUnit>
        <InvestButton>去投资</InvestButton>
      </FundRow>
      <InfoBlock $h={38} $row={37}>
        <QuoteRow>
          <QuotePair>委比<Value $plain>–</Value></QuotePair>
          <span />
          <QuotePair $far><span />
            <Value $plain>–</Value></QuotePair>
        </QuoteRow>
      </InfoBlock>
      <InfoBlock $h={222} $row={36.9}>
        {QUOTES.map(([a, b, bc, c, d, dc, bu, du]) => (
          <QuoteRow key={a}>
            <QuotePair>{a}<Value $color={bc}>{b}{bu && <ValueUnit>{bu}</ValueUnit>}</Value></QuotePair>
            <span />
            <QuotePair $far>{c}<Value $color={dc}>{d}{du && <ValueUnit>{du}</ValueUnit>}</Value></QuotePair>
          </QuoteRow>
        ))}
      </InfoBlock>
      <InfoBlock $h={72} $row={35.5}>
        <InfoCell>总市值<Value $plain $color={TEAL}>–</Value></InfoCell>
        <InfoCell>流通市值<Value $plain $color={TEAL}>–</Value></InfoCell>
      </InfoBlock>
      <InfoBlock $h={209} $split $row={34.6}>
        {DEPTH.flatMap(([a, b, bc, c, d, dc]) => [
          <InfoCell key={a} $col={1} $divided>{a}<Value $plain={b === '–'} $color={bc}>{b}</Value></InfoCell>,
          <InfoCell key={c}>{c}<Value $plain $color={dc}>{d}</Value></InfoCell>,
        ])}
      </InfoBlock>
      <CurrentRow>
        现价
        <CurrentPrice>2344.33</CurrentPrice>
        <CurrentDate>2020-06-30,二</CurrentDate>
      </CurrentRow>
      <MiniChart />
    </InfoBody>
    <ModeTabs>
      <ModeTab $active>分</ModeTab>
      <ModeTab>筹</ModeTab>
      <ModeTab>焰</ModeTab>
    </ModeTabs>
  </InfoPanel>
);

export default function App() {
  return (
    <Page>
      <GlobalStyle />
      <SideBar>
        <SideTab $h={51} $corner>
          <svg width="10" height="10" viewBox="0 0 10 10" fill="#000000">
            <path d="M1 1L6 5L1 9Z" />
            <rect x="7" y="1" width="2" height="8" />
          </svg>
          <SideChar>应</SideChar><SideChar>用</SideChar>
        </SideTab>
        <SideTab $h={53}><SideChar>分</SideChar><SideChar>时</SideChar><SideChar>图</SideChar></SideTab>
        <SideTab $h={53} $active><SideChar $serif>K</SideChar><SideChar>线</SideChar><SideChar>图</SideChar></SideTab>
        <SideTab $h={68}><SideChar>大</SideChar><SideChar>盘</SideChar><SideChar>资</SideChar><SideChar>料</SideChar></SideTab>
        <SideTab $h={52}><SideChar>自</SideChar><SideChar>选</SideChar><SideChar>股</SideChar></SideTab>
        <SideTab $h={67}><SideChar>综</SideChar><SideChar>合</SideChar><SideChar>排</SideChar><SideChar>名</SideChar></SideTab>
        <SideTab $h={53}><SideChar>更</SideChar><SideChar>多</SideChar></SideTab>
      </SideBar>
      <Main>
        <Charts>
          <PricePanel />
          <VolumePanel />
          <VolumeTabs>
            {VOLUME_TABS.map((t, i) => <VolumeTab key={t} $active={i === 0}>{t}</VolumeTab>)}
          </VolumeTabs>
          <KdjPanel />
          <MacdPanel />
        </Charts>
        <DateAxis width="1637" height="17" viewBox="22 1017 1637 17">
          {MONTHS.map(([m, x]) => (
            <g key={m}>
              <line x1={x + 0.5} x2={x + 0.5} y1="1017" y2="1022" stroke={LINE} />
              <AxisLabel x={x + 2} y="1026" fill="#000000">{m}</AxisLabel>
            </g>
          ))}
        </DateAxis>
        <BottomTabs>
          <BottomTab $w={33} $dark>设置</BottomTab>
          <BottomTab $w={90} $dark><NewBadge>NEW</NewBadge>指标平台</BottomTab>
          <BottomTab $w={48} $dark $active>MACD</BottomTab>
          {BOTTOM_TABS.map(([t, w]) => <BottomTab key={t} $w={w}>{t}</BottomTab>)}
        </BottomTabs>
      </Main>
      <Info />
    </Page>
  );
}
